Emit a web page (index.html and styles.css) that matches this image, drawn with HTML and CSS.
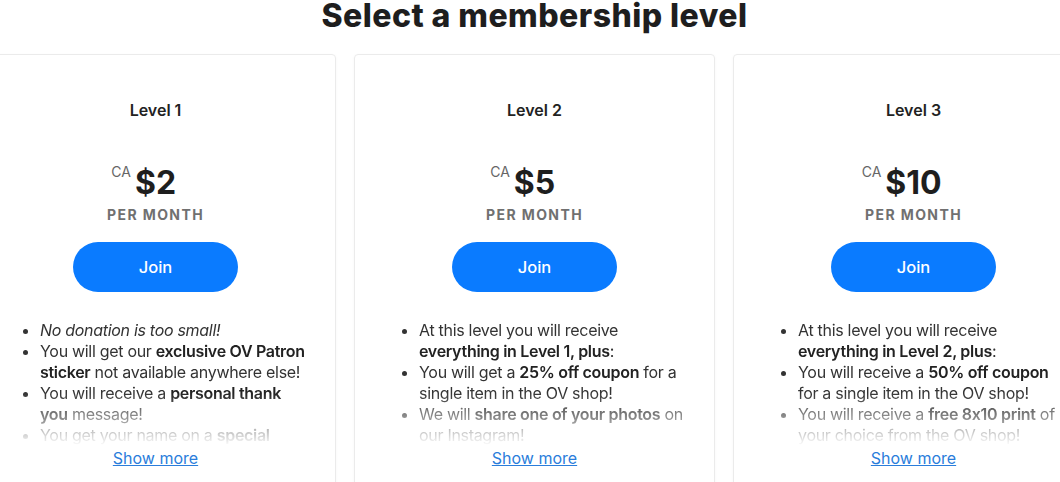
FILE: index.html
```html
<!DOCTYPE html>
<html lang="en">

  <head>
    <meta charset="UTF-8">
    <meta name="viewport" content="width=device-width, initial-scale=1.0">
    <title>Membership levels</title>
    <link rel="stylesheet" href="styles.css">
  </head>

  <body>

    <div class="page">
      <h1>Select a membership level</h1>

      <div class="tiers">

        <div class="card">
          <h3>Level 1</h3>
          <div class="price"><span class="currency">CA</span>$2</div>
          <div class="period">PER MONTH</div>
          <button class="join-btn">Join</button>
          <div class="perks">
            <ul>
              <li><em>No donation is too small!</em></li>
              <li>You will get our <b>exclusive OV Patron sticker</b> not available anywhere else!</li>
              <li>You will receive a <b>personal thank you</b> message!</li>
              <li>You get your name on a <b>special</b> thank you page on our website!</li>
            </ul>
          </div>
          <a class="show-more" href="#">Show more</a>
        </div>

        <div class="card">
          <h3>Level 2</h3>
          <div class="price"><span class="currency">CA</span>$5</div>
          <div class="period">PER MONTH</div>
          <button class="join-btn">Join</button>
          <div class="perks">
            <ul>
              <li>At this level you will receive <b>everything in Level 1, plus</b>:</li>
              <li>You will get a <b>25% off coupon</b> for a single item in the OV shop!</li>
              <li>We will <b>share one of your photos</b> on our Instagram!</li>
            </ul>
          </div>
          <a class="show-more" href="#">Show more</a>
        </div>

        <div class="card">
          <h3>Level 3</h3>
          <div class="price"><span class="currency">CA</span>$10</div>
          <div class="period">PER MONTH</div>
          <button class="join-btn">Join</button>
          <div class="perks">
            <ul>
              <li>At this level you will receive <b>everything in Level 2, plus</b>:</li>
              <li>You will receive a <b>50% off coupon</b> for a single item in the OV shop!</li>
              <li>You will receive a <b>free 8x10 print</b> of your choice from the OV shop!</li>
            </ul>
          </div>
          <a class="show-more" href="#">Show more</a>
        </div>

      </div>
    </div>

  </body>

</html>
```

FILE: styles.css
```css
body {
  font-family: 'Inter', 'Liberation Sans', sans-serif;
  font-feature-settings: "calt" 0;
  background-color: white;
  color: #222;
  margin: 0;
  padding: 0;
  overflow: hidden;
}

.page {
  padding-left: 9px;
}

h1 {
  margin: 0;
  font-size: 32px;
  line-height: 32px;
  font-weight: 800;
  letter-spacing: 0.45px;
  text-align: center;
  color: #1e1e1e;
}

.tiers {
  display: flex;
  justify-content: center;
  gap: 18px;
  margin-top: 22px;
}

.card {
  flex: 0 0 361px;
  box-sizing: border-box;
  height: 520px;
  padding: 43px 24px 0;
  border: 1px solid #ebebeb;
  border-radius: 4px;
  box-shadow: 0 1px 3px rgba(0, 0, 0, 0.04);
  display: flex;
  flex-direction: column;
  align-items: center;
}

.card h3 {
  margin: 0;
  font-size: 16px;
  line-height: 24px;
  font-weight: 600;
  color: #222;
}

.price {
  position: relative;
  margin-top: 41px;
  font-size: 32px;
  line-height: 40px;
  font-weight: 700;
  color: #1e1e1e;
}

.currency {
  position: absolute;
  right: 100%;
  top: -1px;
  margin-right: 4px;
  font-size: 14px;
  line-height: 20px;
  font-weight: 400;
  color: #666;
}

.period {
  margin-top: 2px;
  font-size: 14px;
  line-height: 20px;
  font-weight: 700;
  letter-spacing: 1.4px;
  color: #707070;
}

.join-btn {
  margin-top: 17px;
  width: 165px;
  height: 50px;
  border: none;
  border-radius: 25px;
  background-color: #0a7bff;
  color: white;
  font-family: inherit;
  font-size: 16.5px;
  font-weight: 500;
  cursor: pointer;
}

.join-btn:hover {
  background-color: #0066dd;
}

.perks {
  align-self: stretch;
  margin-top: 28px;
  height: 126px;
  overflow: hidden;
  -webkit-mask-image: linear-gradient(to bottom, black 58%, transparent 100%);
  mask-image: linear-gradient(to bottom, black 58%, transparent 100%);
}

.perks ul {
  margin: 0;
  padding-left: 40px;
  font-size: 16px;
  line-height: 21px;
  letter-spacing: -0.3px;
  color: #333;
}

.perks b {
  font-weight: 600;
  color: #222;
}

.show-more {
  font-size: 16px;
  line-height: 24px;
  color: #2a7ddb;
  text-decoration: underline;
}
```
